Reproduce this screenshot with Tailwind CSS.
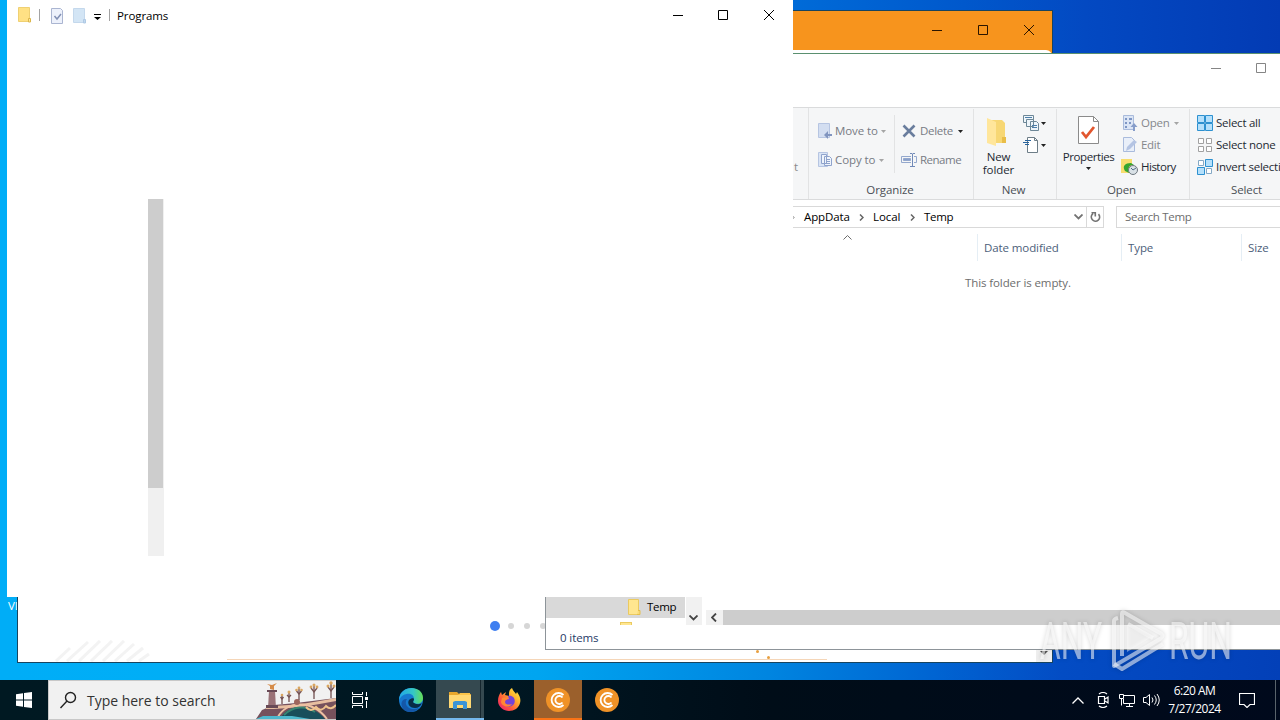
<!DOCTYPE html>
<html lang="en">
<head>
    <meta charset="UTF-8">
    <meta name="viewport" content="width=device-width, initial-scale=1.0">
    <title>Desktop</title>
    <script src="https://cdn.jsdelivr.net/npm/@tailwindcss/browser@4"></script>
</head>
<body class="overflow-hidden font-['Open_Sans','Noto_Sans',sans-serif] text-[11.5px] leading-4 tracking-[-0.1px] text-black">
<div class="relative w-[1280px] h-[720px] overflow-hidden bg-[linear-gradient(90deg,#00adf7_0%,#00aff6_25%,#00a5f0_42%,#0085e0_60%,#0064d2_73%,#034cc4_83%,#0340b8_100%)]">

    <!-- Wallpaper above the windows is a little darker -->
    <div class="absolute left-[793px] top-0 w-[487px] h-[54px] bg-[linear-gradient(90deg,#006bd8,#0058cc_35%,#0349c2_60%,#033bb4)]"></div>
    <span class="absolute left-2 top-[598px] text-white">VL</span>

    <!-- App window with the orange title bar -->
    <section class="absolute left-[17px] top-[10px] w-[1036px] h-[653px] flex flex-col border border-[#17445f] bg-[#f7941d]">
        <header class="flex h-[39px] shrink-0 items-center justify-end gap-9 pr-[18px] pb-px text-[#2b1500]">
            <svg class="w-[10px] h-[10px]" viewBox="0 0 10 10" stroke="currentColor"><path d="M0 5.5h10"/></svg>
            <svg class="w-[10px] h-[10px]" viewBox="0 0 10 10" fill="none" stroke="currentColor"><path d="M.5.5h9v9h-9z"/></svg>
            <svg class="w-[10px] h-[10px]" viewBox="0 0 10 10" stroke="currentColor"><path d="M0 0l10 10M10 0L0 10"/></svg>
        </header>
        <div class="relative grow overflow-hidden rounded-tr-md bg-white">
            <!-- Carousel dots -->
            <div class="absolute left-[472px] top-[571px] flex items-center gap-[10px]">
                <i class="w-[10px] h-[10px] rounded-full bg-[#3f7ff0]"></i>
                <i class="-ml-[2px] w-[6px] h-[6px] rounded-full bg-[#d6d6d6]"></i>
                <i class="w-[6px] h-[6px] rounded-full bg-[#d6d6d6]"></i>
                <i class="w-[6px] h-[6px] rounded-full bg-[#d6d6d6]"></i>
            </div>
            <!-- Faint striped disc -->
            <svg class="absolute left-[36px] top-[590px] w-[100px] h-[22px]" viewBox="0 0 100 22" stroke="#f3f3f3" stroke-width="3">
                <path d="M2 21L16 8M13 21L34 2M25 21L46 1M37 21L58 1M49 21L70 1M61 21L80 4M73 21L89 8M85 21L95 14"/>
            </svg>
            <div class="absolute left-[209px] bottom-[2px] w-[600px] h-px bg-[#f5d6b8]"></div>
            <i class="absolute left-[738px] top-[600px] w-[3px] h-[3px] rounded-full bg-[#e8a040]"></i>
            <i class="absolute left-[749px] top-[606px] w-[3px] h-[3px] rounded-full bg-[#e8a040]"></i>
            <div class="absolute right-0 bottom-0 flex w-[16px] h-[20px] items-center justify-center bg-[#eeeeee]">
                <svg class="w-2 h-1 mt-[2px]" viewBox="0 0 8 4" fill="#505050"><path d="M0 0h8L4 4z"/></svg>
            </div>
        </div>
    </section>

    <!-- Explorer: Temp -->
    <section class="absolute left-[545px] top-[53px] w-[780px] h-[597px] flex flex-col border border-[#8d9499] border-t-[#5a9070] bg-white">
        <header class="flex h-[53px] shrink-0 items-start pt-[9px] pl-[665px] gap-[35px] text-[#858585]">
            <svg class="w-[10px] h-[10px]" viewBox="0 0 10 10" stroke="currentColor"><path d="M0 5.5h10"/></svg>
            <svg class="w-[10px] h-[10px]" viewBox="0 0 10 10" fill="none" stroke="currentColor"><path d="M.5.5h9v9h-9z"/></svg>
        </header>

        <!-- Ribbon -->
        <div class="flex h-[93px] shrink-0 border-y border-[#dadbdc] bg-[#f5f6f7] text-[#1e2a33]">
            <div class="w-[263px] shrink-0 border-r border-[#e2e3e4] pr-[10px] pt-[51px] text-right text-[#8a8a8a]">t</div>

            <div class="flex w-[165px] shrink-0 flex-col justify-between border-r border-[#e2e3e4] mt-px pb-px">
                <div class="flex text-[#777b84]">
                    <div class="flex w-[86px] flex-col gap-[13px] border-r border-[#e2e3e4] mt-[6px] pl-[9px] py-[8px] h-[58px]">
                        <div class="flex items-center gap-[3px]">
                            <svg class="w-[14px] h-4" viewBox="0 0 14 16"><path d="M.5.5h11v14H.5z" fill="#d3def1" stroke="#b6c5e2"/><path d="M14 11H10V8l-4 4 4 4v-3h4z" fill="#8195bf"/></svg>
                            <span class="w-[43px] whitespace-nowrap">Move to</span>
                            <svg class="w-[5px] h-[3px]" viewBox="0 0 5 3" fill="#a5a5a5"><path d="M0 0h5L2.500 3z"/></svg>
                        </div>
                        <div class="flex items-center gap-[3px]">
                            <svg class="w-[14px] h-4" viewBox="0 0 14 16"><path d="M.5.5h9v14h-9z" fill="#d9e4f5" stroke="#b6c5e2"/><path d="M3.500 2.500h5v9h-5zM6.500 4.500h5l2 2v7h-7z" fill="#eff4fb" stroke="#8fa3cc"/><path d="M8 7.500h4M8 9.500h4M8 11.500h4" stroke="#8fa3cc"/></svg>
                            <span class="w-[41px] whitespace-nowrap">Copy to</span>
                            <svg class="w-[5px] h-[3px]" viewBox="0 0 5 3" fill="#a5a5a5"><path d="M0 0h5L2.500 3z"/></svg>
                        </div>
                    </div>
                    <div class="flex flex-col gap-[13px] pl-[7px] pt-[14px]">
                        <div class="flex items-center gap-[4px]">
                            <svg class="w-[14px] h-4" viewBox="0 0 14 16" fill="none" stroke="#697d9d" stroke-width="2.600"><path d="M1.500 2.500l11 11M12.500 2.500l-11 11"/></svg>
                            <span class="w-[34px] whitespace-nowrap tracking-[-0.3px]">Delete</span>
                            <svg class="w-[5px] h-[3px]" viewBox="0 0 5 3" fill="#222"><path d="M0 0h5L2.500 3z"/></svg>
                        </div>
                        <div class="flex items-center gap-[3px]">
                            <svg class="w-[16px] h-4 -ml-px" viewBox="0 0 16 16" fill="none" stroke="#94a8cd"><path d="M10 4.500H.5v6H10M13 4.500h2.500v6H13"/><path d="M2.500 6.500h7v2h-7z" fill="#8aa0cb"/><path d="M9 1.500h2l.5.500.5-.500h2M11.500 2v12M9 14.500h5" stroke="#7089b7"/></svg>
                            <span class="tracking-[-0.5px]">Rename</span>
                        </div>
                    </div>
                </div>
                <div class="text-center text-[#4a4f55] pr-[2px]">Organize</div>
            </div>

            <div class="flex w-[83px] shrink-0 flex-col justify-between border-r border-[#e2e3e4] mt-px pb-px">
                <div class="flex">
                    <div class="flex w-[49px] flex-col items-center pt-[6px] leading-[13px]">
                        <svg class="w-8 h-8 mb-[3px] -ml-[3px]" viewBox="0 0 32 32"><path d="M7 5h14l3 3v20H7z" fill="#f7d774"/><path d="M6 3l9 4v24l-9-3z" fill="#ffe69b"/><path d="M21 22h4v6h-4z" fill="#e9bd48"/></svg>
                        <span>New</span><span>folder</span>
                    </div>
                    <div class="flex flex-col gap-[6px] pt-[6px]">
                        <div class="flex items-center gap-[2px]">
                            <svg class="w-4 h-4" viewBox="0 0 16 16" fill="#eef5fa" stroke="#6d8797"><path d="M.5.5h10v7H.5z"/><path d="M3.500 4.500h7v7h-7zM7.500 6.500h6l2 2v7h-8z"/><path d="M2 2.500h7M9 10.500h5M9 12.500h5" stroke="#4c7eaa"/></svg>
                            <svg class="w-[5px] h-[3px]" viewBox="0 0 5 3" fill="#222"><path d="M0 0h5L2.500 3z"/></svg>
                        </div>
                        <div class="flex items-center gap-[2px]">
                            <svg class="w-4 h-4" viewBox="0 0 16 16" fill="#fff" stroke="#6d7d87"><path d="M4.500.5h7l3 3v12h-10z"/><path d="M11.500.5v3h3" fill="none"/><path d="M2 3.500h6M0 5.500h6M2 7.500h4" stroke="#28649d"/></svg>
                            <svg class="w-[5px] h-[3px]" viewBox="0 0 5 3" fill="#222"><path d="M0 0h5L2.500 3z"/></svg>
                        </div>
                    </div>
                </div>
                <div class="text-center text-[#4a4f55] pr-[3px]">New</div>
            </div>

            <div class="flex w-[133px] shrink-0 flex-col justify-between border-r border-[#e2e3e4] mt-px pb-px">
                <div class="flex">
                    <div class="flex w-[65px] flex-col items-center pt-[6px] pr-[2px] leading-[13px]">
                        <svg class="w-8 h-8 mb-[3px]" viewBox="0 0 32 32" fill="#fff" stroke="#8b8b8b"><path d="M5.500 1.500h15l5 5v22h-20z"/><path d="M20.500 1.500v5h5" fill="none"/><path d="M9 17l4 5 8-10" fill="none" stroke="#e2562f" stroke-width="2.800"/></svg>
                        <span class="tracking-[-0.4px]">Properties</span>
                        <svg class="w-[5px] h-[3px] mt-[4px]" viewBox="0 0 5 3" fill="#222"><path d="M0 0h5L2.500 3z"/></svg>
                    </div>
                    <div class="flex flex-col gap-[6px] pt-[6px]">
                        <div class="flex items-center gap-[3px] text-[#85888c]">
                            <svg class="w-4 h-4" viewBox="0 0 16 16"><path d="M1.500.5h10v14h-10z" fill="#dbe5f5" stroke="#a9bbdc"/><path d="M3 4h2M3 8h2M3 12h2M7 4h3M7 8h2" stroke="#7e96c4" stroke-width="2"/><path d="M11 16v-4H8.500l3.500-4 3.500 4H13v4z" fill="#869dca"/></svg>
                            <span class="w-[30px] tracking-[-0.2px]">Open</span>
                            <svg class="w-[5px] h-[3px]" viewBox="0 0 5 3" fill="#a5a5a5"><path d="M0 0h5L2.500 3z"/></svg>
                        </div>
                        <div class="flex items-center gap-[3px] text-[#85888c]">
                            <svg class="w-4 h-4" viewBox="0 0 16 16"><path d="M1.500.5h8l3 3v11h-11z" fill="#e9eff9" stroke="#a9bbdc"/><path d="M4 14l1-4 7-7 3 2-7 7z" fill="#b4c4e3"/></svg>
                            <span class="tracking-[-0.3px]">Edit</span>
                        </div>
                        <div class="flex items-center gap-[3px]">
                            <svg class="w-4 h-4 overflow-visible" viewBox="0 0 16 16"><path d="M-1 0h11v14H-1z" fill="#f7dd6f"/><path d="M3 12C0 7 3 4 9 4l3 2c-5 0-6 2-5 8z" fill="#35a52f"/><circle cx="11" cy="11" r="4.500" fill="#d9e1e6" stroke="#6f7880"/><path d="M9 9l2 2 3-2" fill="none" stroke="#516e86"/></svg>
                            <span class="tracking-[-0.5px]">History</span>
                        </div>
                    </div>
                </div>
                <div class="text-center text-[#4a4f55] pr-[3px]">Open</div>
            </div>

            <div class="flex w-[113px] shrink-0 flex-col justify-between mt-px pb-px whitespace-nowrap">
                <div class="flex flex-col gap-[6px] pt-[6px] pl-[7px]">
                    <div class="flex items-center gap-[3px]">
                        <svg class="w-4 h-4" viewBox="0 0 16 16" fill="#b5e0fb" stroke="#2d91d0"><path d="M.5.5h7v7h-7zM8.500.5h7v7h-7zM.5 8.500h7v7h-7zM8.500 8.500h7v7h-7z"/></svg>
                        <span class="tracking-[-0.25px]">Select all</span>
                    </div>
                    <div class="flex items-center gap-[3px]">
                        <svg class="w-4 h-4" viewBox="0 0 16 16" fill="#fff" stroke="#a1a1a1"><path d="M1.500 1.500h5v5h-5zM9.500 1.500h5v5h-5zM1.500 9.500h5v5h-5zM9.500 9.500h5v5h-5z"/></svg>
                        <span class="tracking-[-0.25px]">Select none</span>
                    </div>
                    <div class="flex items-center gap-[3px]">
                        <svg class="w-4 h-4" viewBox="0 0 16 16"><path d="M1.500 1.500h5v5h-5zM9.500 9.500h5v5h-5z" fill="#fff" stroke="#85a9c5"/><path d="M8.500.5h7v7h-7zM.5 8.500h7v7h-7z" fill="#b5e0fb" stroke="#2d91d0"/></svg>
                        <span class="tracking-[-0.25px]">Invert selecti</span>
                    </div>
                </div>
                <div class="text-center text-[#4a4f55]">Select</div>
            </div>
        </div>

        <!-- Address bar and search -->
        <div class="flex h-[34px] shrink-0 pt-[6px]">
            <div class="flex w-[558px] shrink-0 h-[22px] border border-[#d9d9d9]">
                <div class="flex grow items-center pl-[244px]">
                    <svg class="w-1 h-[7px] mr-[9px]" viewBox="0 0 4 7" fill="none" stroke="#777"><path d="M0 .5l3 3-3 3"/></svg>
                    <span class="w-[47px]">AppData</span>
                    <svg class="w-[5px] h-[7px] ml-[8px] mr-[9px]" viewBox="0 0 5 7" fill="none" stroke="#666" stroke-width="1.500"><path d="M1 .5l3 3-3 3"/></svg>
                    <span class="w-[28px]">Local</span>
                    <svg class="w-[5px] h-[7px] ml-[9px] mr-[9px]" viewBox="0 0 5 7" fill="none" stroke="#666" stroke-width="1.500"><path d="M1 .5l3 3-3 3"/></svg>
                    <span class="tracking-[-0.3px]">Temp</span>
                </div>
                <div class="flex w-[16px] items-center justify-center">
                    <svg class="w-[9px] h-[6px]" viewBox="0 0 9 6" fill="none" stroke="#737373" stroke-width="1.800"><path d="M.5.5l4 4 4-4"/></svg>
                </div>
                <div class="flex w-[17px] items-center justify-center border-l border-[#d9d9d9]">
                    <svg class="w-[11px] h-[12px]" viewBox="0 0 11 12" fill="none" stroke="#737373" stroke-width="1.600"><path d="M3 2.600a4.200 4.200 0 1 0 5.500.5M1.500 1.800h3.800v3.600"/></svg>
                </div>
            </div>
            <div class="flex w-[208px] shrink-0 h-[22px] items-center border border-[#d9d9d9] ml-[12px] pl-[8px] tracking-[-0.3px] text-[#6d6d6d]">Search Temp</div>
        </div>

        <div class="flex h-[27px] shrink-0 items-center text-[#4c607a]">
            <div class="flex w-[432px] h-full shrink-0 justify-center border-r border-[#e5eef5] pl-[171px]">
                <svg class="w-[9px] h-[5px] mt-px" viewBox="0 0 9 5" fill="none" stroke="#6d6d6d"><path d="M.5 4.500l4-4 4 4"/></svg>
            </div>
            <div class="flex w-[144px] h-full shrink-0 items-center border-r border-[#e5eef5] pl-[6px]">Date modified</div>
            <div class="flex w-[120px] h-full shrink-0 items-center border-r border-[#e5eef5] pl-[6px]">Type</div>
            <div class="flex h-full items-center pl-[6px]">Size</div>
        </div>

        <!-- Navigation pane and file list -->
        <div class="flex h-[364px] shrink-0">
            <div class="flex w-[139px] shrink-0 flex-col justify-end overflow-hidden">
                <div class="flex h-[23px] shrink-0 items-center gap-[6px] bg-[#d9d9d9] pl-[82px]">
                    <svg class="w-[13px] h-4" viewBox="0 0 13 16"><path d="M.5.5h10v15H.5z" fill="#ffe68f" stroke="#ebca60"/><path d="M10 11.500h2v4h-3" fill="#f9dc7a" stroke="#e5bf4c"/></svg>
                    <span class="tracking-[-0.3px]">Temp</span>
                </div>
                <div class="flex h-[7px] shrink-0 items-end pl-[74px]"><i class="w-[12px] h-[3px] border border-b-0 border-[#ebca60] bg-[#ffe68f]"></i></div>
            </div>
            <div class="flex w-[16px] shrink-0 flex-col items-center justify-end bg-[#f1f1f1] ml-px pr-px pb-[4px]">
                <svg class="w-[9px] h-[6px]" viewBox="0 0 9 6" fill="none" stroke="#444" stroke-width="1.800"><path d="M.5.5l4 4 4-4"/></svg>
            </div>
            <div class="flex w-[620px] flex-col justify-between ml-[4px]">
                <div class="pl-[259px] pt-[14px] text-[#6d6d6d]">This folder is empty.</div>
                <div class="flex h-[15px]">
                    <div class="flex w-[17px] items-center justify-center bg-[#f1f1f1] pr-px">
                        <svg class="w-[6px] h-[9px]" viewBox="0 0 6 9" fill="none" stroke="#444" stroke-width="1.800"><path d="M5 .5l-4 4 4 4"/></svg>
                    </div>
                    <div class="grow bg-[#cdcdcd]"></div>
                </div>
            </div>
        </div>
        <footer class="flex grow items-center pl-[14px] pt-[2px] text-[#263a66]">0 items</footer>
    </section>

    <!-- Explorer: Programs, body not painted yet -->
    <section class="absolute left-[7px] top-0 w-[786px] h-[597px] flex flex-col bg-white">
        <header class="flex h-[31px] items-center pl-[11px]">
            <svg class="w-[14px] h-4 -mt-px" viewBox="0 0 14 16"><path d="M.5.5h11v14H.5z" fill="#ffe184" stroke="#efd073"/><path d="M10.500 11.500h2v3.500h-2z" fill="#ffe99c" stroke="#dcb64b"/></svg>
            <i class="w-px h-[12px] -mt-px bg-[#a3a3a3] ml-[7px] mr-[11px]"></i>
            <svg class="w-[13px] h-4" viewBox="0 0 13 16" fill="#edf1fb" stroke="#aab5d1"><path d="M.5.5h9l2 2v13H.5z"/><path d="M3.500 8l2.500 3 4-5" fill="none" stroke="#8290b4" stroke-width="1.500"/></svg>
            <svg class="w-[14px] h-4 ml-[9px]" viewBox="0 0 14 16"><path d="M.5.5h11v14H.5z" fill="#d3e5f5" stroke="#c4d8ec"/><path d="M10.500 11.500h2v3.500h-2z" fill="#c3d9ef" stroke="#afc9e4"/></svg>
            <svg class="w-[7px] h-[6px] ml-[7px] mt-[3px]" viewBox="0 0 7 6"><path d="M0 0h7v1H0zM0 3h7L3.500 6z"/></svg>
            <i class="w-px h-[12px] -mt-px bg-[#a3a3a3] ml-[8px] mr-[7px]"></i>
            <span>Programs</span>
            <div class="ml-auto flex -mt-px pr-[19px]">
                <svg class="w-[10px] h-[10px] mr-[35px]" viewBox="0 0 10 10" stroke="#000"><path d="M0 5.500h10"/></svg>
                <svg class="w-[10px] h-[10px] mr-[36px]" viewBox="0 0 10 10" fill="none" stroke="#000"><path d="M.5.5h9v9h-9z"/></svg>
                <svg class="w-[10px] h-[10px]" viewBox="0 0 10 10" stroke="#000"><path d="M0 0l10 10M10 0L0 10"/></svg>
            </div>
        </header>
        <div class="mt-[168px] ml-[141px] w-[16px] h-[357px] bg-[#f0f0f0]">
            <div class="w-[15px] h-[289px] bg-[#cdcdcd]"></div>
        </div>
    </section>

    <!-- Taskbar -->
    <footer class="absolute inset-x-0 bottom-0 flex h-10 bg-[linear-gradient(90deg,#001922,#001722_40%,#000d18_60%,#00091c)] text-white">
        <div class="flex w-12 items-center justify-center">
            <svg class="w-4 h-4" viewBox="0 0 16 16" fill="#fff"><path d="M0 2.300l7-1v6.200H0zM8 1.100L16 0v7.500H8zM0 8.500h7v6.200l-7-1zM8 8.500h8V16l-8-1.100z"/></svg>
        </div>
        <div class="flex w-[288px] items-center border border-r-0 border-[#c8c8c8] bg-[#f1f1f1] text-[#333]">
            <svg class="w-[18px] h-[18px] ml-[11px]" viewBox="0 0 18 18" fill="none" stroke="#222" stroke-width="1.400"><circle cx="10.500" cy="6.500" r="5"/><path d="M7 10L.5 17"/></svg>
            <span class="ml-[9px] mt-px text-[14px] tracking-[-0.02px]">Type here to search</span>
            <!-- Bridge with lamps and a column -->
            <svg class="ml-auto w-[80px] h-[38px]" viewBox="0 0 80 38">
                <path d="M0 38l6-9 12-5 22-2 16-2 24-3v21z" fill="#76515c"/>
                <path d="M10 25c20 0 40-2 70-8v3c-30 6-50 8-70 8z" fill="#e7bea0"/>
                <path d="M24 38c8-16 32-16 45 0z" fill="#194e5b"/>
                <path d="M22 36c8-16 34-18 49 2" fill="none" stroke="#edc1a3" stroke-width="2"/>
                <path d="M28 34c9-9 22-10 31-3" fill="none" stroke="#378371" stroke-width="2"/>
                <path d="M0 38l7-3h29l18 3z" fill="#4eb8ce"/>
                <path d="M50 26q5 6 10 0q5 6 10-1q5 5 10-1" fill="none" stroke="#f0c38d" stroke-width="2"/>
                <path d="M13 10h6l1 17h-8z" fill="#9a7277"/><path d="M11 9h10v2H11zM10 24h12v3H10z" fill="#684a56"/>
                <path d="M14 8V5l-3-2 5 1 5-2-3 3v4z" fill="#d58b48"/>
                <circle cx="41" cy="21" r="3" fill="#9d665d"/>
                <g stroke="#735151" stroke-width="1.300" fill="none"><path d="M26 23v-9M33 21v-9M43 19V8M58 18V5M75 17V3"/><path d="M24.500 16l1.500 2 1.500-2M31 14l2 2 2-2M40.500 10l2.500 3 2.500-3M55 7l3 4 3-4M72 6l3 4 3-4"/></g>
                <g fill="#d9a660"><circle cx="26" cy="14" r="1.300"/><circle cx="33" cy="11" r="1.500"/><circle cx="40.500" cy="9" r="1.300"/><circle cx="43" cy="7" r="1.400"/><circle cx="45.500" cy="9" r="1.300"/><circle cx="55" cy="6" r="1.400"/><circle cx="58" cy="4" r="1.500"/><circle cx="61" cy="6" r="1.400"/><circle cx="72" cy="5" r="1.500"/><circle cx="75" cy="2" r="1.700"/><circle cx="78" cy="5" r="1.500"/></g>
            </svg>
        </div>
        <div class="flex w-[50px] items-center justify-center">
            <svg class="w-4 h-4 -ml-[2px]" viewBox="0 0 16 16" fill="none" stroke="#fff"><path d="M.5 4.500h10v7H.5zM.5 0v2.500h10V0M.5 16v-2.500h10V16M14.500 0v4M14.500 9v7"/><path d="M13 5h3v3h-3z" fill="#fff" stroke="none"/></svg>
        </div>
        <div class="flex w-[50px] items-center justify-center">
            <svg class="w-6 h-6" viewBox="0 0 24 24">
                <defs>
                    <linearGradient id="edgeTop" x1="0" x2="1"><stop stop-color="#20a7e8"/><stop offset=".6" stop-color="#35c7c5"/><stop offset="1" stop-color="#66df55"/></linearGradient>
                </defs>
                <circle cx="12" cy="12" r="12" fill="#1679cf"/>
                <path d="M0 12C1-4 24-3 24 10c0 5-5 7-9 5-2-1 0-2 0-4 0-7-11-7-15 1z" fill="url(#edgeTop)"/>
                <path d="M8 11c-4 5 2 13 12 9-4 5-11 5-15 2C0 16 3 10 8 11z" fill="#1457a8"/>
                <path d="M15 11c0 2-2 3 0 4 3 2 7 1 8 0-1 3-4 5-7 5-6 0-8-5-6-8 2-2 5-2 5-1z" fill="#082c46"/>
            </svg>
        </div>
        <div class="flex w-12 items-center justify-center border-b-2 border-[#76b9ed] bg-[#354950] pt-[2px]">
            <div class="flex grow h-full items-center justify-center">
                <svg class="w-[22px] h-[18px]" viewBox="0 0 22 18"><path d="M0 1h8l2 2h12v14H0z" fill="#e8a72c"/><path d="M0 4h22v13H0z" fill="#ffd873"/><path d="M0 4h9l2-2h10v2z" fill="#fbc44a"/><path d="M4 18V11l2-1h10l2 1v7h-4v-4H8v4z" fill="#3c94d7"/></svg>
            </div>
            <i class="-ml-[4px] w-px h-[38px] -mt-[2px] bg-[#15262e]"></i>
            <i class="w-[3px]"></i>
        </div>
        <div class="flex w-[50px] items-center justify-center">
            <svg class="w-6 h-6" viewBox="0 0 24 24">
                <defs><linearGradient id="fox" x1="1" y1="0" x2="0" y2="1"><stop stop-color="#fff04b"/><stop offset=".35" stop-color="#ffb22c"/><stop offset=".65" stop-color="#ff573b"/><stop offset="1" stop-color="#e4167b"/></linearGradient></defs>
                <path d="M15 0c1 3 3 4 4 6l1-2c3 4 4 7 3 11-1 5-6 8-11 8S1 19 1 13c0-4 1-6 3-9l1 3 4-3-1 3 4 1c0-4 0-6 3-8z" fill="url(#fox)"/>
                <path d="M11 8c6-1 8 4 6 8-2 3-8 4-10 0-1-2 0-3 1-4l4-1z" fill="#7343d8"/><path d="M5 10c3-1 4 0 6 0-1 2-3 2-3 4 0 3 5 3 7 2-2 4-10 3-11-2z" fill="#ff8634"/>
            </svg>
        </div>
        <div class="flex w-12 items-center justify-center border-b-2 border-[#f97316] bg-[#9b602c] pt-[2px]">
            <svg class="w-6 h-6" viewBox="0 0 24 24" fill="none" stroke="#fff"><circle cx="12" cy="12" r="12" fill="#ef9227" stroke="none"/><path d="M17.500 7A7 7 0 1 0 17.500 17" stroke-width="1.800"/><path d="M16.500 9.500A4 4 0 1 0 16.500 14.500" stroke-width="1.800"/></svg>
        </div>
        <div class="flex w-[50px] items-center justify-center">
            <svg class="w-6 h-6" viewBox="0 0 24 24" fill="none" stroke="#fff"><circle cx="12" cy="12" r="12" fill="#ef9227" stroke="none"/><path d="M17.500 7A7 7 0 1 0 17.500 17" stroke-width="1.800"/><path d="M16.500 9.500A4 4 0 1 0 16.500 14.500" stroke-width="1.800"/></svg>
        </div>

        <!-- Tray -->
        <div class="ml-auto flex items-center">
            <svg class="w-3 h-[7px]" viewBox="0 0 12 7" fill="none" stroke="#fff" stroke-width="1.300"><path d="M.5 6.500L6 1l5.500 5.500"/></svg>
            <svg class="w-3 h-4 ml-[13px]" viewBox="0 0 12 16" fill="none" stroke="#fff"><path d="M1.500 4.500h6v7h-6zM8 7l3-2v6L8 9M2 2q4-3 8 0M2 14q4 3 8 0" stroke-width="1.200"/></svg>
            <svg class="w-4 h-4 ml-[10px]" viewBox="0 0 16 16" fill="none" stroke="#fff"><path d="M5 3.500h10.500v8h-11V7M10.500 12v2.500M7 14.500h7M.5 2.500h4v4h-4zM2.500 6.500v7"/></svg>
            <svg class="w-[17px] h-4 ml-[8px]" viewBox="0 0 17 16" fill="none" stroke="#fff"><path d="M.5 5.500H3l3.500-3v11L3 10.500H.5zM9 5.500q2 2.500 0 5M11.500 3.500q3.500 4.500 0 9M14 2q4.500 6 0 12"/></svg>
            <div class="w-[70px] pr-px text-center leading-[18px] text-[12px] tracking-[-0.5px]">6:20 AM<br>7/27/2024</div>
            <svg class="w-4 h-4 ml-[9px]" viewBox="0 0 16 16" fill="none" stroke="#fff" stroke-width="1.200"><path d="M.5 1.500h15v11H11l-3 3-3-3H.5z"/></svg>
            <i class="w-px h-10 bg-[#59636b] ml-[20px] mr-[4px]"></i>
        </div>
    </footer>

    <!-- Watermark -->
    <svg class="absolute left-[1030px] top-[600px] w-[215px] h-[78px] drop-shadow-[0_0_2px_rgba(0,0,0,0.3)]" viewBox="0 0 215 78" font-family="Roboto, sans-serif" font-size="51" fill="#fff" fill-opacity=".55">
        <text x="10" y="59" textLength="62" lengthAdjust="spacingAndGlyphs">ANY</text>
        <text x="139" y="59" textLength="63" lengthAdjust="spacingAndGlyphs">RUN</text>
        <g fill="none" stroke="#fff" stroke-opacity=".55" stroke-width="4" stroke-linejoin="round">
            <path d="M92 56V14q0-3 3-1l35 20q5 3 0 6L84 66V21q0-2 4-3"/>
            <path d="M84 64l8 5 41-25M98 24l25 14"/>
        </g>
        <path d="M97 26l23 12-23 14z" fill-opacity=".4"/>
    </svg>
</div>
</body>
</html>
